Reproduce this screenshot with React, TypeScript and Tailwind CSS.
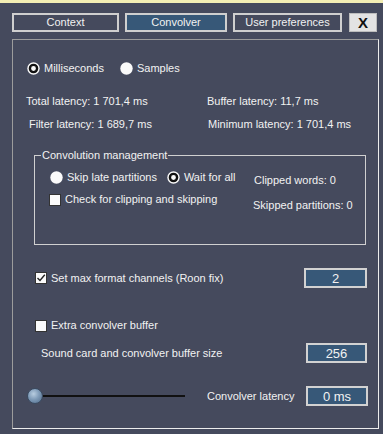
import React from 'react';

const font = { fontFamily: '"Liberation Sans", Arial, sans-serif' };

function Radio({ checked, label }: { checked?: boolean; label: string }) {
  return (
    <div className="flex items-center h-[12px]">
      <svg width="13" height="13" viewBox="0 0 13 13" className="shrink-0">
        <circle cx="6.5" cy="6.5" r="6.2" fill="#fafafa" />
        {checked && <circle cx="6.5" cy="6.5" r="3.6" fill="#fafafa" stroke="#111" strokeWidth="2.4" />}
      </svg>
      <span className="ml-[4px] leading-none whitespace-nowrap">{label}</span>
    </div>
  );
}

function Check({ checked, label }: { checked?: boolean; label: string }) {
  return (
    <div className="flex items-center h-[13px]">
      <div className="w-[12px] h-[12px] bg-[#fafafa] border border-[#333] flex items-center justify-center shrink-0">
        {checked && (
          <svg width="10" height="10" viewBox="0 0 10 10">
            <path d="M1.5 5 L4 7.5 L8.8 1.8" fill="none" stroke="#222" strokeWidth="1.4" />
          </svg>
        )}
      </div>
      <span className="ml-[4px] leading-none whitespace-nowrap">{label}</span>
    </div>
  );
}

function ValueBox({ value, w }: { value: string; w: string }) {
  return (
    <div className={`${w} h-[20px] bg-[#375878] border-2 border-[#d2d2d2] flex items-center justify-center text-[13px] leading-none`}>
      {value}
    </div>
  );
}

export default function App() {
  return (
    <div className="w-[383px] h-[434px] overflow-hidden bg-[#454a5d] text-[#f2f2f2] text-[11px] flex flex-col" style={font}>
      <div className="h-[3px] bg-[#f3eeb4] shrink-0" />

      {/* tabs */}
      <div className="flex mt-[10px] ml-[12px] h-[19px]">
        <div className="w-[107px] border-2 border-[#cfcfcf] flex items-center justify-center">Context</div>
        <div className="w-[102px] ml-[6px] border-2 border-[#cfcfcf] bg-[#375878] flex items-center justify-center">Convolver</div>
        <div className="w-[109px] ml-[6px] border-2 border-[#cfcfcf] flex items-center justify-center">User preferences</div>
        <div className="w-[28px] ml-[7px] bg-[#e3e3e3] border border-[#bdbdbd] flex items-center justify-center text-[#111] text-[15px] font-bold leading-none">X</div>
      </div>

      {/* main panel */}
      <div className="mt-[7px] ml-[12px] w-[367px] h-[390px] border border-t-[#9c9c9c] border-l-[#9c9c9c] border-r-[#ececec] border-b-[#ececec] flex flex-col">
        <div className="flex mt-[22px] ml-[14px]">
          <Radio checked label="Milliseconds" />
          <div className="ml-[16px]">
            <Radio label="Samples" />
          </div>
        </div>

        <div className="flex mt-[19px]">
          <div className="w-[181px] flex flex-col">
            <div className="h-[16px] flex items-center ml-[13px]">Total latency: 1 701,4 ms</div>
            <div className="h-[16px] flex items-center ml-[16px] mt-[7px]">Filter latency: 1 689,7 ms</div>
          </div>
          <div className="flex flex-col ml-[13px]">
            <div className="h-[16px] flex items-center">Buffer latency: 11,7 ms</div>
            <div className="h-[16px] flex items-center ml-[1px] mt-[7px]">Minimum latency: 1 701,4 ms</div>
          </div>
        </div>

        {/* group box */}
        <div className="relative mt-[23px] ml-[21px] w-[332px] h-[90px] border border-[#d0d0d0] flex">
          <div className="absolute -top-[8px] left-[6px] px-[1px] bg-[#454a5d] leading-[14px]">Convolution management</div>
          <div className="flex flex-col ml-[15px] w-[204px]">
            <div className="flex mt-[15px]">
              <Radio label="Skip late partitions" />
              <div className="ml-[10px]">
                <Radio checked label="Wait for all" />
              </div>
            </div>
            <div className="mt-[10px] -ml-[1px]">
              <Check label="Check for clipping and skipping" />
            </div>
          </div>
          <div className="flex flex-col">
            <div className="mt-[17px] h-[14px] flex items-center">Clipped words: 0</div>
            <div className="mt-[11px] h-[14px] flex items-center -ml-[1px]">Skipped partitions: 0</div>
          </div>
        </div>

        <div className="flex items-center mt-[23px] ml-[22px] w-[332px] justify-between">
          <Check checked label="Set max format channels (Roon fix)" />
          <ValueBox value="2" w="w-[63px]" />
        </div>

        <div className="mt-[31px] ml-[22px]">
          <Check label="Extra convolver buffer" />
        </div>

        <div className="flex items-center mt-[11px] ml-[28px] w-[326px] justify-between">
          <span>Sound card and convolver buffer size</span>
          <ValueBox value="256" w="w-[61px]" />
        </div>

        <div className="flex items-center mt-[23px] ml-[14px] w-[341px]">
          <div className="flex items-center w-[158px]">
            <div className="w-[16px] h-[16px] rounded-full shrink-0 bg-[radial-gradient(circle_at_40%_35%,#b8cde0_0%,#7f9bb8_45%,#4f6a88_100%)] border border-[#3a4a60]" />
            <div className="flex-1 h-[2px] bg-[#111]" />
          </div>
          <span className="ml-[22px] whitespace-nowrap">Convolver latency</span>
          <div className="ml-auto">
            <ValueBox value="0 ms" w="w-[62px]" />
          </div>
        </div>
      </div>
    </div>
  );
}
